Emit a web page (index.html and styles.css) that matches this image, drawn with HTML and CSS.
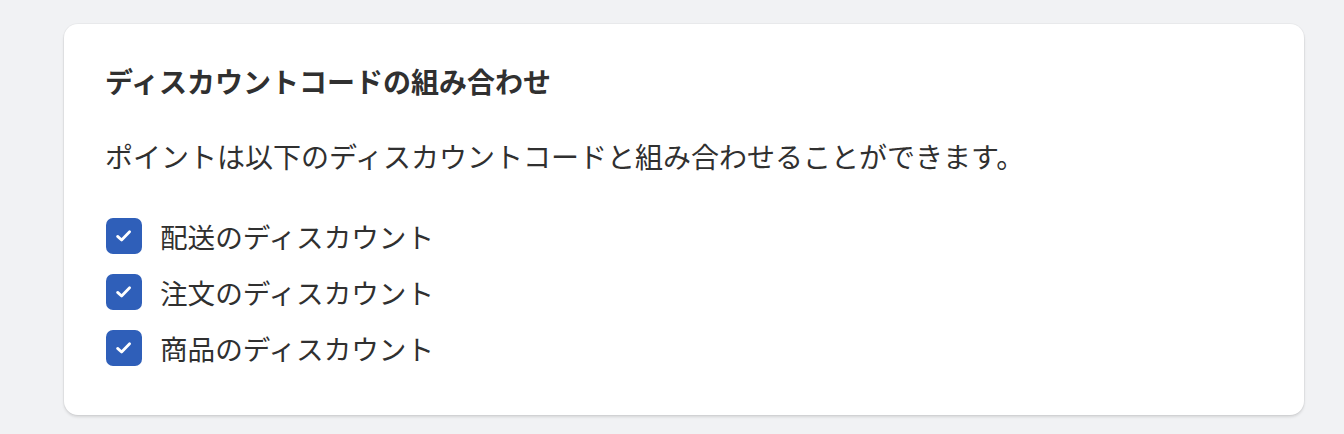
FILE: index.html
```html
<!DOCTYPE html>
<html>
<head>
    <title>ディスカウントコードの組み合わせ</title>
    <link rel="stylesheet" href="styles.css">
</head>
<body>
    <div class="card">
        <h2 class="card-title">ディスカウントコードの組み合わせ</h2>
        <p class="card-text">ポイントは以下のディスカウントコードと組み合わせることができます。</p>
        <ul class="options">
            <li class="option">
                <span class="checkbox"><svg viewBox="0 0 20 20" width="20" height="20"><path d="M3.6 10.4l4 3.6 8-8.2" fill="none" stroke="#fff" stroke-width="2.8" stroke-linecap="round" stroke-linejoin="round"/></svg></span>
                <span class="option-label">配送のディスカウント</span>
            </li>
            <li class="option">
                <span class="checkbox"><svg viewBox="0 0 20 20" width="20" height="20"><path d="M3.6 10.4l4 3.6 8-8.2" fill="none" stroke="#fff" stroke-width="2.8" stroke-linecap="round" stroke-linejoin="round"/></svg></span>
                <span class="option-label">注文のディスカウント</span>
            </li>
            <li class="option">
                <span class="checkbox"><svg viewBox="0 0 20 20" width="20" height="20"><path d="M3.6 10.4l4 3.6 8-8.2" fill="none" stroke="#fff" stroke-width="2.8" stroke-linecap="round" stroke-linejoin="round"/></svg></span>
                <span class="option-label">商品のディスカウント</span>
            </li>
        </ul>
    </div>
</body>
</html>
```

FILE: styles.css
```css
body { margin: 0; padding: 24px 40px 19px 64px; background: #f1f2f4; font-family: "Noto Sans CJK JP", "Noto Sans", sans-serif; color: #303030; }
.card { background: #fff; border-radius: 14px; padding: 40px 41px 39px 41px; box-shadow: 0 2px 3px rgba(0, 0, 0, 0.12), 0 0 0 1px rgba(0, 0, 0, 0.03); }
.card-title { margin: 0; font-size: 28px; line-height: 34px; font-weight: 700; }
.card-text { margin: 38px 0 0; font-size: 28px; line-height: 40px; font-weight: 400; }
.options { list-style: none; margin: 32px 0 0; padding: 0; }
.option { display: flex; align-items: center; height: 56px; }
.checkbox { width: 36px; height: 36px; margin-left: 1px; border-radius: 7px; background: #2f5fb9; display: flex; align-items: center; justify-content: center; }
.option-label { margin-left: 18px; font-size: 27.6px; line-height: 40px; }
```
